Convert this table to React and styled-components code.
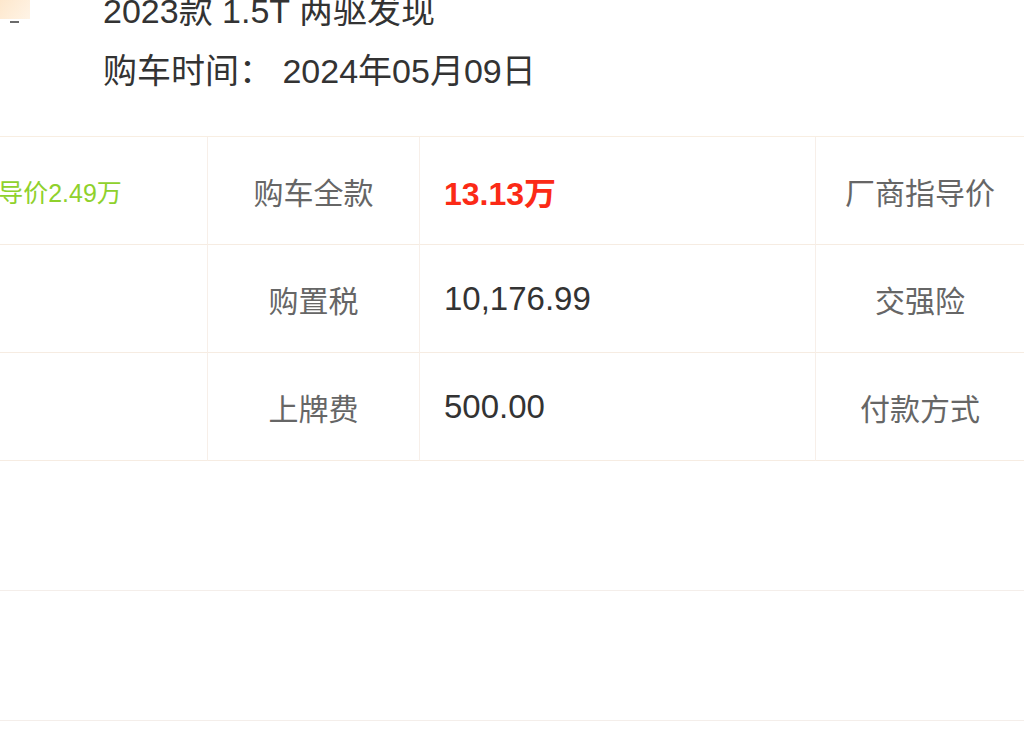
import React from "react";
import styled, { createGlobalStyle } from "styled-components";

// 购车信息页
const GlobalStyle = createGlobalStyle`
  html, body {
    margin: 0;
    padding: 0;
    background: #fff;
  }
  body {
    font-family: "Liberation Sans", "Noto Sans CJK SC", sans-serif;
    overflow: hidden;
  }
`;

const rows = [
  {
    note: "低于指导价2.49万",
    label: "购车全款",
    value: "13.13万",
    strong: true,
    extra: "厂商指导价",
  },
  { note: "", label: "购置税", value: "10,176.99", extra: "交强险" },
  { note: "", label: "上牌费", value: "500.00", extra: "付款方式" },
];

const App = () => {
  return (
    <React.Fragment>
      <GlobalStyle />
      <Page>
        <Header>
          <Thumb>
            <svg width="30" height="44" viewBox="0 0 30 44">
              <defs>
                <linearGradient id="peach" x1="0" y1="0" x2="1" y2="1">
                  <stop offset="0" stopColor="#fde3c4" />
                  <stop offset="1" stopColor="#fff4e6" />
                </linearGradient>
              </defs>
              <rect x="0" y="0" width="30" height="38" fill="url(#peach)" />
              <rect x="10" y="40" width="9" height="2" fill="#6b6b6b" />
            </svg>
          </Thumb>
          <Info>
            <Line>2023款 1.5T 两驱发现</Line>
            <Line>购车时间： 2024年05月09日</Line>
          </Info>
        </Header>

        <Table>
          {rows.map((r, idx) => (
            <React.Fragment key={idx}>
              <Cell $color="#8fd12c" $size="25px">
                {r.note}
              </Cell>
              <Cell $color="#666">{r.label}</Cell>
              <Cell
                $align="left"
                $color={r.strong ? "#fb2a16" : "#333"}
                $size={r.strong ? "32px" : "33px"}
                $bold={r.strong}
              >
                {r.value}
              </Cell>
              <Cell $color="#666">{r.extra}</Cell>
            </React.Fragment>
          ))}
        </Table>

        <Block />
        <Block />
      </Page>
    </React.Fragment>
  );
};

const Page = styled.div`
  width: 1024px;
  height: 743px;
  overflow: hidden;
  background: #fff;
`;

const Header = styled.div`
  display: flex;
  align-items: flex-start;
  margin-top: -19px;
  height: 155px;
`;

const Thumb = styled.div`
  width: 30px;
  margin-right: 73px;
  svg {
    display: block;
  }
`;

const Info = styled.div`
  display: flex;
  flex-direction: column;
`;

const Line = styled.div`
  font-size: 34px;
  line-height: 60px;
  color: #333;
  white-space: nowrap;
`;

const Table = styled.div`
  display: grid;
  grid-template-columns: 370px 212px 396px 208px;
  margin-left: -162px;
  border-top: 1px solid #f8eee2;
`;

const Cell = styled.div`
  box-sizing: border-box;
  height: 108px;
  display: flex;
  align-items: center;
  justify-content: ${(props) => (props.$align === "left" ? "flex-start" : "center")};
  padding-left: ${(props) => (props.$align === "left" ? "24px" : "0")};
  border-bottom: 1px solid #f6ece2;
  border-right: 1px solid #f7efe9;
  color: ${(props) => props.$color};
  font-size: ${(props) => props.$size || "30px"};
  font-weight: ${(props) => (props.$bold ? "bold" : "normal")};
  white-space: nowrap;

  &:nth-child(4n) {
    border-right: none;
  }
`;

const Block = styled.div`
  box-sizing: border-box;
  height: 130px;
  border-bottom: 1px solid #f4eeea;
`;

export default App;
